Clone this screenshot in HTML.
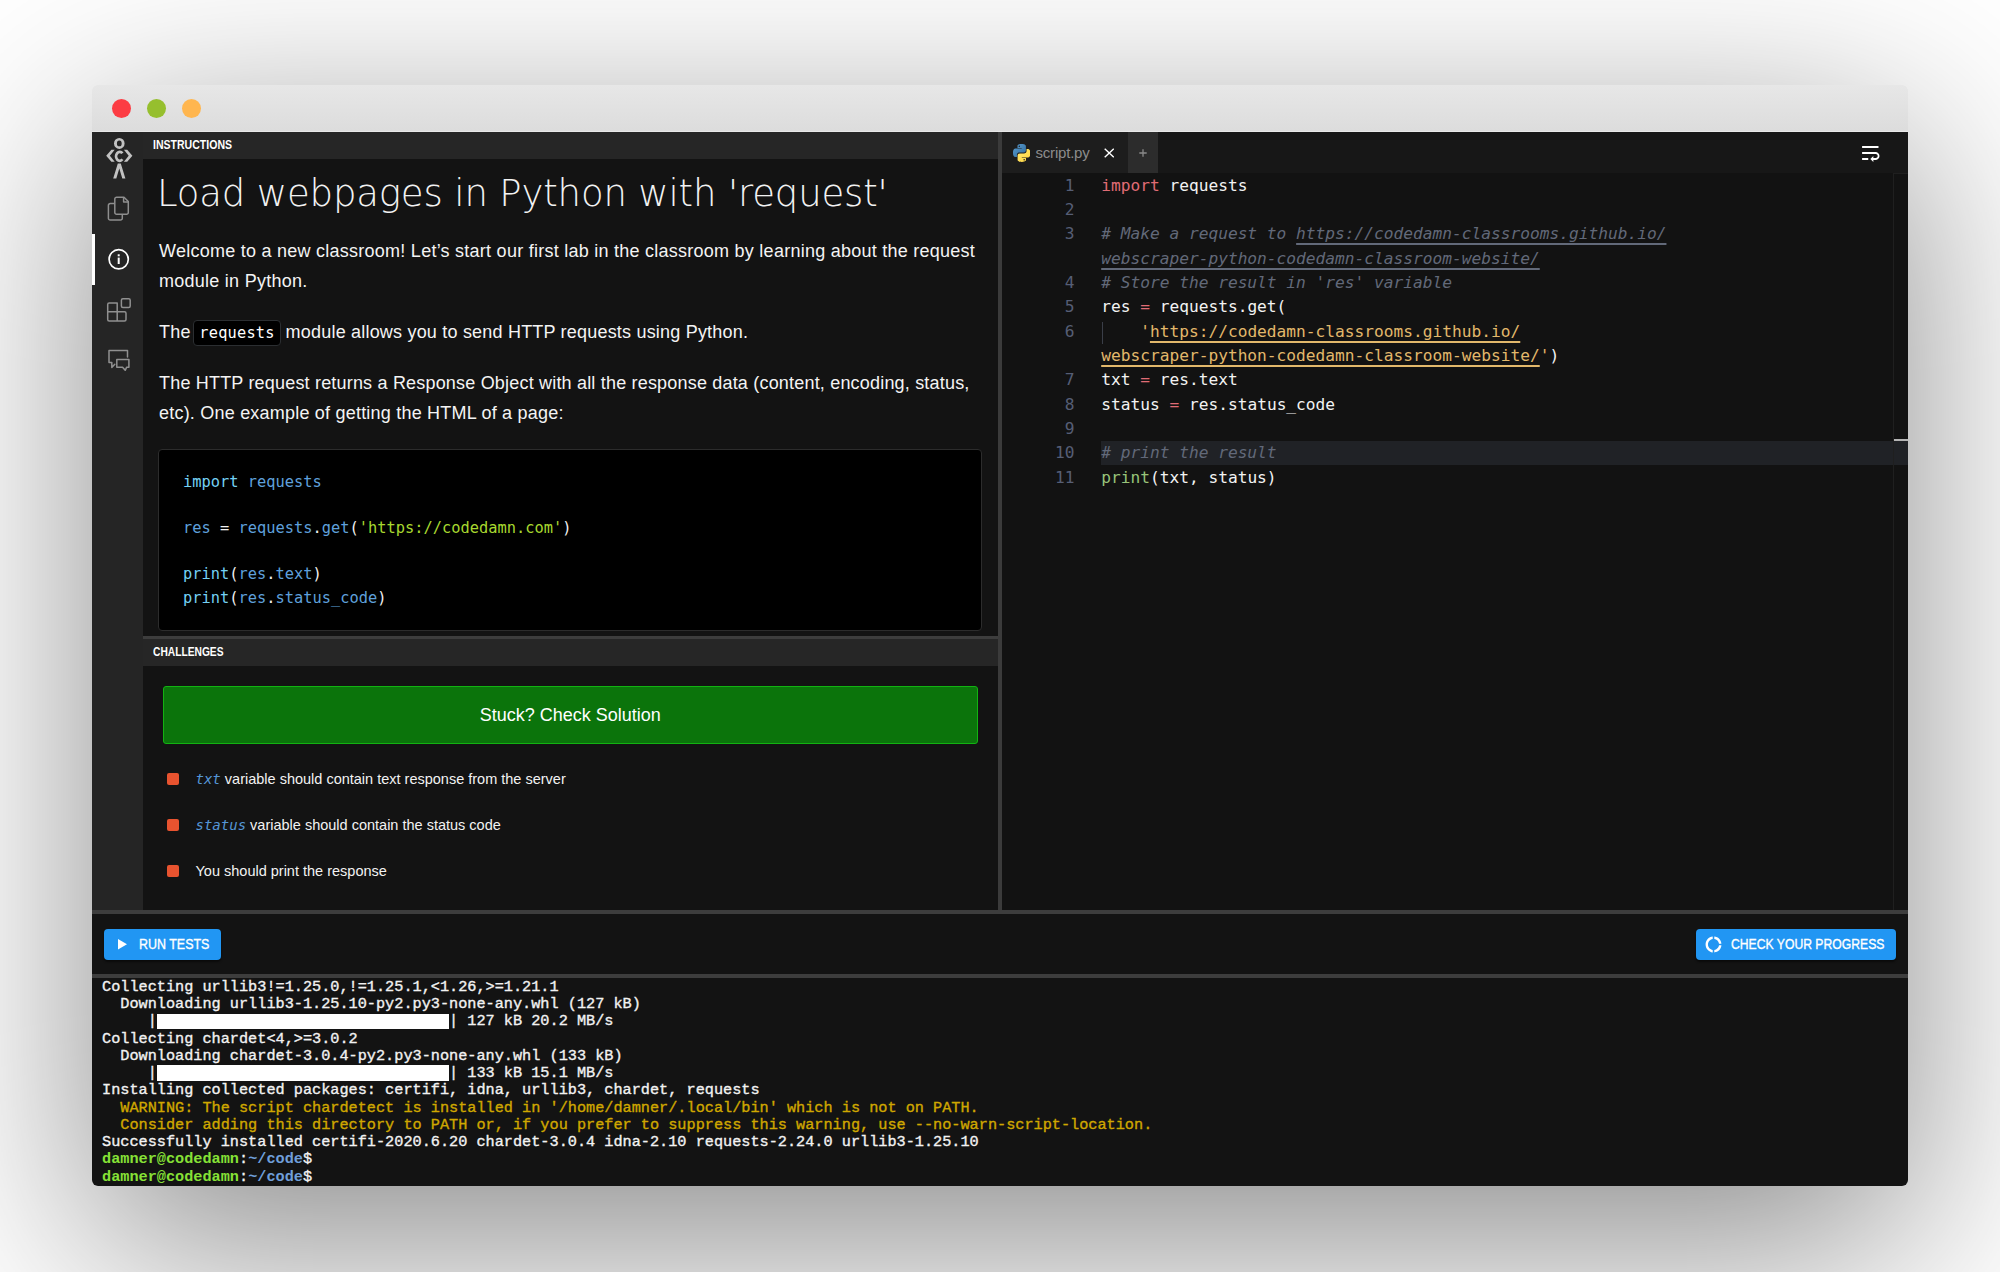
<!DOCTYPE html>
<html lang="en">
<head>
<meta charset="utf-8">
<title>Load webpages in Python with 'request'</title>
<style>
*{box-sizing:border-box;margin:0;padding:0}
html,body{width:2000px;height:1272px;overflow:hidden;background:#fff}
body{position:relative;font-family:"Liberation Sans",sans-serif;color:#fff}
.abs{position:absolute}
#win{position:absolute;left:92px;top:85px;width:1816px;height:1101px;border-radius:6px;background:linear-gradient(#e7e7e7 0,#e7e7e7 20px,#131313 60px);
  box-shadow:0 57px 204px 3px rgba(0,0,0,.46);overflow:hidden}
#tb{position:absolute;left:0;top:0;width:1816px;height:47px;background:linear-gradient(#e7e7e7,#dcdcdc);box-shadow:inset 0 -1px 0 rgba(255,255,255,.35)}
.dot{position:absolute;top:14px;width:19px;height:19px;border-radius:50%}
#side{position:absolute;left:0;top:47px;width:51px;height:778px;background:#252525}
#side .act{position:absolute;left:0;top:102px;width:3px;height:51px;background:#fff}
.hdr{position:absolute;left:51px;width:855px;background:#262626;font-size:12px;font-weight:bold;color:#fff;padding-left:10px}
.hdr span{display:block;transform-origin:0 50%;transform:scaleX(.878);white-space:nowrap}
#vdiv{position:absolute;left:906px;top:47px;width:4px;height:778px;background:#3b3b3b}
.hdiv{position:absolute;left:0;width:1816px;height:4px;background:#3d3d3d}

#h1{position:absolute;left:65px;top:84px;letter-spacing:-0.14px;font-family:"DejaVu Sans Light","DejaVu Sans","Liberation Sans",sans-serif;font-weight:200;font-size:37px;line-height:50px;white-space:nowrap;color:#f2f2f2;transform-origin:0 50%}
.p{position:absolute;left:67px;width:840px;font-size:18px;line-height:30px;color:#f4f4f4;white-space:nowrap}
.p span.l{display:block;transform-origin:0 50%}
code,.mono{font-family:"DejaVu Sans Mono","Liberation Mono",monospace}
.ic{display:inline-block;font-size:15.3px;line-height:25.7px;height:26px;padding:0 5.3px;margin:0 -0.5px 0 -2.8px;background:#000;border:1px solid #2b2e31;border-radius:4px;color:#fff;vertical-align:0}
#pre{position:absolute;left:66px;top:364px;width:824px;height:182px;background:#000;border:1px solid #2c2c2c;border-radius:4px}
#pre pre{position:absolute;left:24px;top:20.5px;font-family:"DejaVu Sans Mono","Liberation Mono",monospace;font-size:15.36px;line-height:23.2px;color:#f0f0f0}
.k{color:#74d1f4}.b{color:#5fa0dc}.s{color:#a8d82f}
#green{position:absolute;left:71px;top:600.5px;width:814.5px;height:58.5px;background:#0b740b;border:1px solid #12b312;border-radius:3px;font-size:18px;line-height:56px;text-align:center;color:#fff}
.ch{position:absolute;left:75px;height:12px;width:12px;border-radius:2px;background:#e8532f}
.ct{position:absolute;left:103.5px;font-size:14.5px;line-height:20px;white-space:nowrap;color:#f2f2f2;transform-origin:0 50%}
.ct i{font-family:"DejaVu Sans Mono","Liberation Mono",monospace;font-style:italic;font-size:14px;color:#5596d6}

#ed{position:absolute;left:910px;top:47px;width:906px;height:778px;background:#121212;overflow:hidden}
#tabs{position:absolute;left:0;top:0;width:906px;height:41px;background:#171717}
#tab1{position:absolute;left:0;top:0;width:126px;height:41px;background:#1d1d1d}
#tab2{position:absolute;left:126px;top:0;width:30px;height:41px;background:#2c2c2c}
#tab1 .nm{position:absolute;left:33.5px;top:11px;font-size:15px;line-height:20px;color:#8c8c8c;letter-spacing:-.2px}
#code{position:absolute;left:0;top:41.6px;width:906px;font-family:"DejaVu Sans Mono","Liberation Mono",monospace;font-size:16.21px;line-height:24.33px;color:#f3f3f3}
#code .r{position:relative;height:24.33px;white-space:pre}
#code .n{position:absolute;left:0;width:72.5px;text-align:right;color:#565e75}
#code .c{position:absolute;left:99.2px}
#code .cur{position:absolute;left:99px;right:0;top:0;height:24px;background:#202226}
.cm{color:#626979;font-style:italic}.kw{color:#e06c75}.st{color:#e2b86b}.fn{color:#98c379}
.u{text-decoration:underline;text-decoration-thickness:1.6px;text-underline-offset:3.7px}
#guide{position:absolute;left:99.5px;top:2px;width:1px;height:22px;background:#3a3e48}
#mini{position:absolute;left:890.5px;top:41px;width:15px;height:737px;border-left:1px solid #1f1f1f;border-top:1px solid #1f1f1f}
#mini i{position:absolute;left:0;top:265px;width:16px;height:2px;background:#b4b4b4}

.btn{position:absolute;top:844px;height:30.5px;border-radius:4px;background:#2196f3;box-shadow:0 2px 2px rgba(0,0,0,.5);color:#fff;font-size:14px;font-weight:normal;-webkit-text-stroke:.35px #fff;line-height:30.5px;white-space:nowrap}
.btn span{position:absolute;top:0;transform-origin:0 50%}
#term{position:absolute;left:10px;top:893.8px;font-family:"Liberation Mono","DejaVu Sans Mono",monospace;font-weight:normal;-webkit-text-stroke:.35px currentColor;font-size:15.23px;line-height:17.27px;color:#f2f2f2;white-space:pre}
#term div{height:17.27px}
.y{color:#cfa700}.g{color:#86e136;font-weight:bold;-webkit-text-stroke:0}.bl{color:#6f9fda;font-weight:bold;-webkit-text-stroke:0}
.bar{background:#fff;color:#fff;display:inline-block;height:15.6px;line-height:15.6px;vertical-align:top;margin-top:.2px;overflow:hidden;-webkit-text-stroke:0}
</style>
</head>
<body>
<div id="win">
  <div id="tb">
    <div class="dot" style="left:20px;background:#fc3c43"></div>
    <div class="dot" style="left:55px;background:#96bf2e"></div>
    <div class="dot" style="left:90px;background:#ffb64f"></div>
  </div>
  <div id="side"><div class="act"></div>
    <svg class="abs" style="left:0;top:0" width="51" height="260" viewBox="0 0 51 260" fill="none">
      <!-- logo -->
      <g fill="#c2c2c2" stroke="none">
        <path fill-rule="evenodd" d="M27.3 5.9a5.300 5.500 0 1 0 0 11a5.300 5.500 0 1 0 0-11zM27.3 8.500a2.400 2.900 0 1 1 0 5.800a2.400 2.900 0 1 1 0-5.800z"/>
        <path d="M14.200 23.700L19.400 17.800H22.700L17.900 23.700L22.700 29.700H19.400z"/>
        <path d="M40.400 23.700L35.200 17.800H31.900L36.700 23.700L31.900 29.700H35.200z"/>
        <path d="M25.800 31.400H28.800L33.400 46.400H30.300L27.300 36.400L24.300 46.400H21.200z"/>
      </g>
      <path d="M30.400 21.300A3.600 4.500 0 1 0 30.400 27.300" stroke="#c2c2c2" stroke-width="2.800" fill="none"/>
      <!-- files -->
      <g stroke="#8e8e8e" stroke-width="1.500" stroke-linejoin="round">
        <path d="M22.400 71.600H18.200a1.800 1.800 0 0 0-1.800 1.800V86.200a1.800 1.800 0 0 0 1.800 1.800H28.500a1.800 1.800 0 0 0 1.800-1.800V82.600"/>
        <path d="M24.600 65.200H32.000L36.300 69.500V80.400a1.800 1.800 0 0 1-1.800 1.800H24.600a1.800 1.800 0 0 1-1.800-1.800V67a1.800 1.800 0 0 1 1.800-1.800z"/>
        <path d="M31.600 65.600V69.900H36"/>
      </g>
      <!-- info -->
      <circle cx="26.700" cy="127.300" r="9.600" stroke="#fff" stroke-width="1.700"/>
      <rect x="25.700" y="122.300" width="2" height="2" fill="#fff"/>
      <rect x="25.700" y="125.600" width="2" height="6.400" fill="#fff"/>
      <!-- extensions -->
      <g stroke="#909090" stroke-width="1.500" stroke-linejoin="round">
        <path d="M25.200 171.000V179.800H15.700V172.500a1.500 1.500 0 0 1 1.500-1.500zM15.700 179.800H25.200V189H17.200a1.500 1.500 0 0 1-1.500-1.500zM25.200 179.800H32.500a1.500 1.500 0 0 1 1.500 1.500V187.500a1.500 1.500 0 0 1-1.500 1.500H25.200z"/>
        <rect x="29.400" y="166.700" width="8.800" height="8.800" rx="1.500"/>
      </g>
      <!-- chat -->
      <g stroke="#909090" stroke-width="1.500" stroke-linejoin="round" stroke-linecap="round">
        <path d="M35.500 225.000V218.600H17.000V230.600H19.800V235.400L22.800 232.200"/>
        <path d="M24.800 227.600H36.900V235.200H34.700L33.200 238.300L30.600 235.200H24.800z"/>
      </g>
    </svg>
  </div>
  <div class="hdr" style="top:47px;height:27px;line-height:27px"><span>INSTRUCTIONS</span></div>

  <div id="h1">Load webpages in Python with 'request'</div>
  <div class="p" style="top:151px"><span class="l" style="letter-spacing:.254px">Welcome to a new classroom! Let’s start our first lab in the classroom by learning about the request</span><span class="l" style="letter-spacing:.26px">module in Python.</span></div>
  <div class="p" style="top:232px"><span class="l" style="letter-spacing:.2px">The <code class="ic">requests</code> module allows you to send HTTP requests using Python.</span></div>
  <div class="p" style="top:282.5px"><span class="l" style="letter-spacing:.19px">The HTTP request returns a Response Object with all the response data (content, encoding, status,</span><span class="l" style="letter-spacing:.21px">etc). One example of getting the HTML of a page:</span></div>
  <div id="pre"><pre><span class="k">import</span> <span class="b">requests</span>

<span class="b">res</span> = <span class="b">requests</span>.<span class="b">get</span>(<span class="s">'https://codedamn.com'</span>)

<span class="k">print</span>(<span class="b">res</span>.<span class="b">text</span>)
<span class="k">print</span>(<span class="b">res</span>.<span class="b">status_code</span>)</pre></div>
  <div class="hdiv" style="top:550.5px;left:51px;width:855px;height:3.5px"></div>
  <div class="hdr" style="top:554px;height:26.5px;line-height:26.5px"><span style="transform:scaleX(.853)">CHALLENGES</span></div>
  <div id="green">Stuck? Check Solution</div>
  <div class="ch" style="top:688px"></div><div class="ct" style="top:684px"><i>txt</i> variable should contain text response from the server</div>
  <div class="ch" style="top:734px"></div><div class="ct" style="top:730px"><i>status</i> variable should contain the status code</div>
  <div class="ch" style="top:779.5px"></div><div class="ct" style="top:775.5px">You should print the response</div>

  <div id="ed">
    <div id="tabs"><div id="tab1"><svg class="abs" style="left:10.500px;top:12px" width="17.500" height="18" viewBox="0 0 110 112"><defs><linearGradient id="pb" x1="0" y1="0" x2="1" y2="1"><stop offset="0" stop-color="#5a9fd4"/><stop offset="1" stop-color="#306998"/></linearGradient><linearGradient id="py" x1="0" y1="0" x2="1" y2="1"><stop offset="0" stop-color="#ffe873"/><stop offset="1" stop-color="#ffd43b"/></linearGradient></defs>
        <path fill="url(#pb)" d="M54.300 0C26.500 0 28.300 12 28.300 12l0 12.500h26.500v3.700H17.800S0 26.200 0 54.200s15.500 27 15.500 27h9.300v-13s-.5-15.500 15.300-15.500h26.300s14.800.2 14.800-14.300V14.500S83.400 0 54.300 0zM39.700 8.400a4.800 4.800 0 1 1 0 9.600 4.800 4.800 0 0 1 0-9.600z"/>
        <path fill="url(#py)" d="M55.700 112c27.800 0 26-12 26-12l0-12.500H55.200v-3.700h37S110 85.800 110 57.800 94.500 30.800 94.500 30.800h-9.300v13s.5 15.500-15.300 15.500H43.600s-14.800-.2-14.800 14.300v24S26.600 112 55.700 112zM70.300 103.600a4.800 4.800 0 1 1 0-9.600 4.800 4.800 0 0 1 0 9.600z"/>
      </svg><span class="nm">script.py</span><svg class="abs" style="left:101.500px;top:16.300px" width="10.500" height="10" viewBox="0 0 10.500 10"><path d="M.7.700L9.800 9.300M9.800.7L.7 9.300" stroke="#fff" stroke-width="1.400"/></svg></div><div id="tab2"><svg class="abs" style="left:10.600px;top:17px" width="8" height="8" viewBox="0 0 8 8"><path d="M4 .3V7.700M.3 4H7.700" stroke="#8a8a8a" stroke-width="1.300"/></svg></div>
      <svg class="abs" style="left:855.600px;top:9px" width="24.600" height="24" viewBox="0 0 24 24" preserveAspectRatio="none"><path fill="#fff" d="M4 19h6v-2H4v2zM20 5H4v2h16V5zm-3 6H4v2h13.250c1.100 0 2 .9 2 2s-.9 2-2 2H15v-2l-3 3 3 3v-2h2c2.210 0 4-1.790 4-4s-1.790-4-4-4z"/></svg></div>
    <div id="code">
      <div class="r"><span class="n">1</span><span class="c"><span class="kw">import</span> requests</span></div>
      <div class="r"><span class="n">2</span><span class="c"></span></div>
      <div class="r"><span class="n">3</span><span class="c"><span class="cm"># Make a request to <span class="u">https://codedamn-classrooms.github.io/</span></span></span></div>
      <div class="r"><span class="n"></span><span class="c"><span class="cm"><span class="u">webscraper-python-codedamn-classroom-website/</span></span></span></div>
      <div class="r"><span class="n">4</span><span class="c"><span class="cm"># Store the result in 'res' variable</span></span></div>
      <div class="r"><span class="n">5</span><span class="c">res <span class="kw">=</span> requests.get(</span></div>
      <div class="r"><div id="guide"></div><span class="n">6</span><span class="c">    <span class="st">'<span class="u">https://codedamn-classrooms.github.io/</span></span></span></div>
      <div class="r"><span class="n"></span><span class="c"><span class="st"><span class="u">webscraper-python-codedamn-classroom-website/</span>'</span>)</span></div>
      <div class="r"><span class="n">7</span><span class="c">txt <span class="kw">=</span> res.text</span></div>
      <div class="r"><span class="n">8</span><span class="c">status <span class="kw">=</span> res.status_code</span></div>
      <div class="r"><span class="n">9</span><span class="c"></span></div>
      <div class="r"><div class="cur"></div><span class="n">10</span><span class="c"><span class="cm"># print the result</span></span></div>
      <div class="r"><span class="n">11</span><span class="c"><span class="fn">print</span>(txt, status)</span></div>
    </div>
    <div id="mini"><i></i></div>
  </div>
  <div id="vdiv"></div>
  <div class="hdiv" style="top:825px"></div>
  <div class="hdiv" style="top:889px"></div>

  <div class="btn" style="left:12px;width:117px"><svg class="abs" style="left:14px;top:10.3px" width="9" height="10.4" viewBox="0 0 9 10.4"><path d="M0 0L9 5.2L0 10.4Z" fill="#fff"/></svg><span style="left:34.5px;transform:scaleX(.89)">RUN TESTS</span></div>
  <div class="btn" style="left:1604px;width:200px"><svg class="abs" style="left:7.8px;top:5.7px" width="19" height="19" viewBox="0 0 24 24"><path fill="#fff" d="M11 5.08V2c-5 .5-9 4.81-9 10s4 9.5 9 10v-3.08c-3-.48-6-3.4-6-6.92s3-6.44 6-6.920zM18.970 11H22c-.47-5-4-8.530-9-9v3.080C16 5.510 18.540 8 18.970 11zM13 18.920V22c5-.47 8.530-4 9-9h-3.030c-.43 3-2.970 5.490-5.970 5.920z"/></svg><span style="left:35px;transform:scaleX(.87)">CHECK YOUR PROGRESS</span></div>
  <div id="term"><div>Collecting urllib3!=1.25.0,!=1.25.1,&lt;1.26,&gt;=1.21.1</div><div>  Downloading urllib3-1.25.10-py2.py3-none-any.whl (127 kB)</div><div>     |<span class="bar">████████████████████████████████</span>| 127 kB 20.2 MB/s</div><div>Collecting chardet&lt;4,&gt;=3.0.2</div><div>  Downloading chardet-3.0.4-py2.py3-none-any.whl (133 kB)</div><div>     |<span class="bar">████████████████████████████████</span>| 133 kB 15.1 MB/s</div><div>Installing collected packages: certifi, idna, urllib3, chardet, requests</div><div class="y">  WARNING: The script chardetect is installed in '/home/damner/.local/bin' which is not on PATH.</div><div class="y">  Consider adding this directory to PATH or, if you prefer to suppress this warning, use --no-warn-script-location.</div><div>Successfully installed certifi-2020.6.20 chardet-3.0.4 idna-2.10 requests-2.24.0 urllib3-1.25.10</div><div><span class="g">damner@codedamn</span>:<span class="bl">~/code</span>$</div><div><span class="g">damner@codedamn</span>:<span class="bl">~/code</span>$</div></div>
</div>
</body>
</html>
